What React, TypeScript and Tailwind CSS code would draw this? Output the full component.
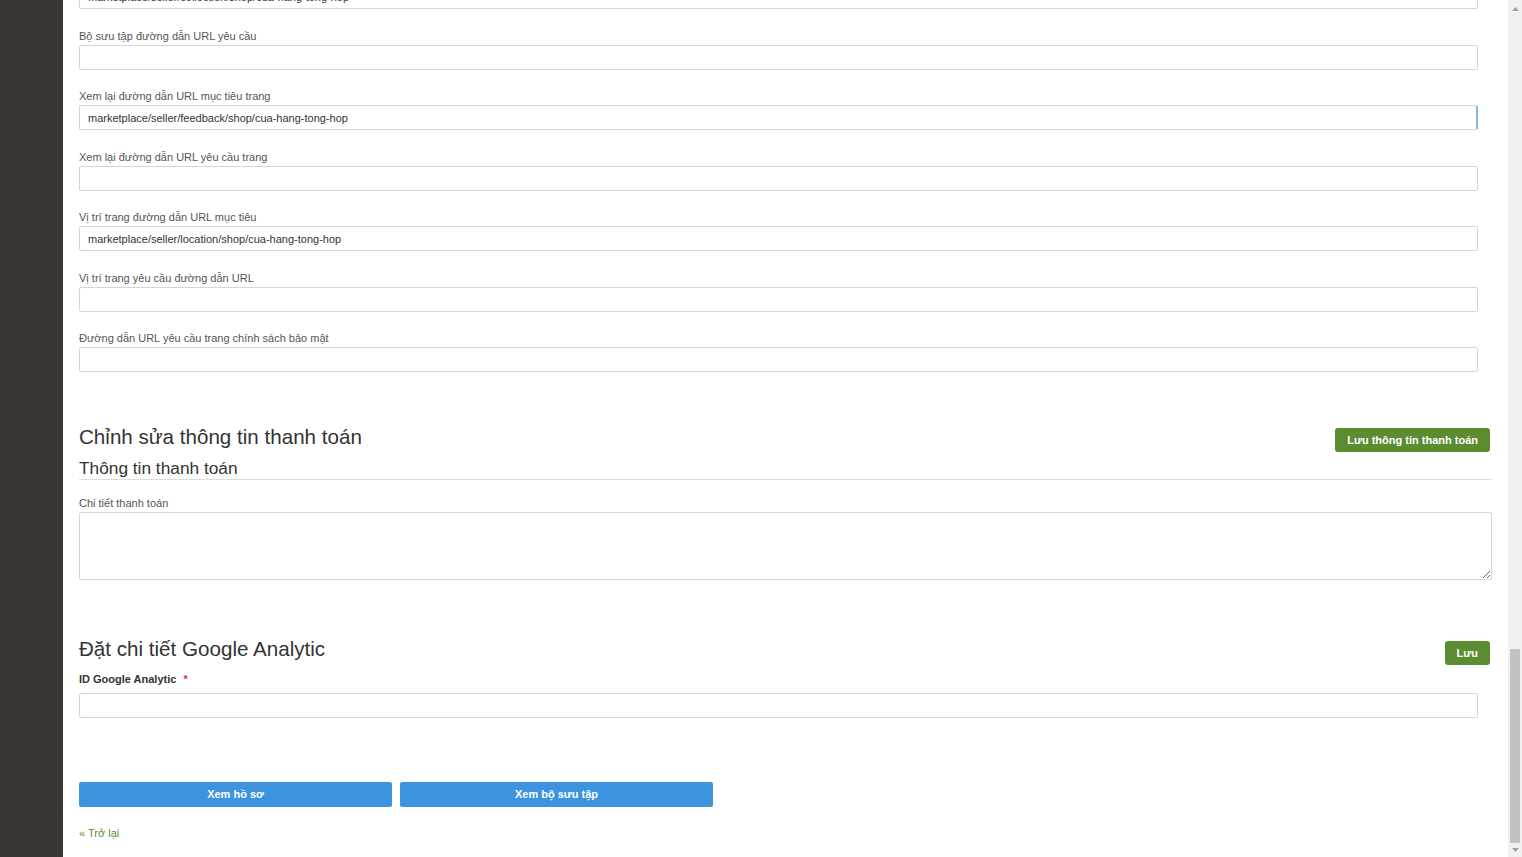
const fields = [
  { label: 'Bộ sưu tập đường dẫn URL mục tiêu', value: 'marketplace/seller/collection/shop/cua-hang-tong-hop' },
  { label: 'Bộ sưu tập đường dẫn URL yêu cầu', value: '' },
  { label: 'Xem lại đường dẫn URL mục tiêu trang', value: 'marketplace/seller/feedback/shop/cua-hang-tong-hop', focus: true },
  { label: 'Xem lại đường dẫn URL yêu cầu trang', value: '' },
  { label: 'Vị trí trang đường dẫn URL mục tiêu', value: 'marketplace/seller/location/shop/cua-hang-tong-hop' },
  { label: 'Vị trí trang yêu cầu đường dẫn URL', value: '' },
  { label: 'Đường dẫn URL yêu cầu trang chính sách bảo mật', value: '' },
];

function Scrollbar() {
  return (
    <div className="flex h-full w-[14px] shrink-0 flex-col bg-[#f1f1f1]">
      <div className="flex h-[17px] items-center justify-center">
        <svg width="7" height="4" viewBox="0 0 7 4"><path d="M0 4 L3.5 0 L7 4 Z" fill="#a3a3a3" /></svg>
      </div>
      <div className="flex flex-1 flex-col justify-end px-[2px]">
        <div className="h-[194px] bg-[#c1c1c1]" />
      </div>
      <div className="flex h-[14px] items-center justify-center">
        <svg width="7" height="4" viewBox="0 0 7 4"><path d="M0 0 L3.5 4 L7 0 Z" fill="#a3a3a3" /></svg>
      </div>
    </div>
  );
}

export default function App() {
  return (
    <div className="flex h-[857px] w-full overflow-hidden bg-white font-['Liberation_Sans',Arial,sans-serif]">
      <aside className="w-[63px] shrink-0 bg-[#3a3632]" />

      <main className="flex-1 overflow-hidden px-4">
        <div className="mt-[-33px]">
          {/* URL fields */}
          <div className="flex flex-col gap-[18.5px]">
            {fields.map((f) => (
              <div key={f.label}>
                <label className="block text-[11px] leading-[17px] text-[#555]">{f.label}</label>
                <input
                  readOnly
                  value={f.value}
                  className={`block h-[25px] w-[99%] rounded-[2px] border border-[#d6d6d6] bg-white px-2 text-[11px] text-[#333] outline-none ${
                    f.focus ? 'border-r-2 border-r-[#8ab8da]' : ''
                  }`}
                />
              </div>
            ))}
          </div>

          {/* Payment info */}
          <div className="mt-[53px] flex h-[24px] items-start justify-between">
            <h2 className="text-[20.6px] leading-[24px] text-[#333]">Chỉnh sửa thông tin thanh toán</h2>
            <button className="mr-[2px] mt-[3px] h-[24px] shrink-0 rounded-[3px] bg-[#5b8c32] px-3 text-[11px] font-bold text-white">
              Lưu thông tin thanh toán
            </button>
          </div>
          <h3 className="mt-[9px] border-b border-[#ddd] pb-[1px] text-[17.3px] leading-[20px] text-[#333]">
            Thông tin thanh toán
          </h3>
          <label className="mt-[16px] block text-[11px] leading-[15px] text-[#555]">Chi tiết thanh toán</label>
          <textarea className="mt-[1px] block h-[68px] w-full rounded-[2px] border border-[#d6d6d6] bg-white px-2 text-[12px] outline-none" />

          {/* Google Analytic */}
          <div className="mt-[57px] flex h-[24px] items-start justify-between">
            <h2 className="text-[20.6px] leading-[24px] text-[#333]">Đặt chi tiết Google Analytic</h2>
            <button className="mr-[2px] mt-[4px] h-[24px] shrink-0 rounded-[3px] bg-[#5b8c32] px-3 text-[11px] font-bold text-white">
              Lưu
            </button>
          </div>
          <label className="mt-[10px] block text-[11px] font-bold leading-[16px] text-[#333]">
            ID Google Analytic <span className="ml-1 text-[#e02b27]">*</span>
          </label>
          <input className="mt-[6px] block h-[25px] w-[99%] rounded-[2px] border border-[#d6d6d6] bg-white px-2 text-[12px] outline-none" />

          <div className="mt-[64px] flex gap-2">
            <button className="h-[25px] w-[313px] rounded-[2px] bg-[#3c94df] text-[11px] font-bold text-white">Xem hồ sơ</button>
            <button className="h-[25px] w-[313px] rounded-[2px] bg-[#3c94df] text-[11px] font-bold text-white">Xem bộ sưu tập</button>
          </div>
          <a href="#" className="mt-[18px] block text-[11px] leading-[16px] text-[#5b8c32]">
            « Trở lại
          </a>
        </div>
      </main>

      <Scrollbar />
    </div>
  );
}
